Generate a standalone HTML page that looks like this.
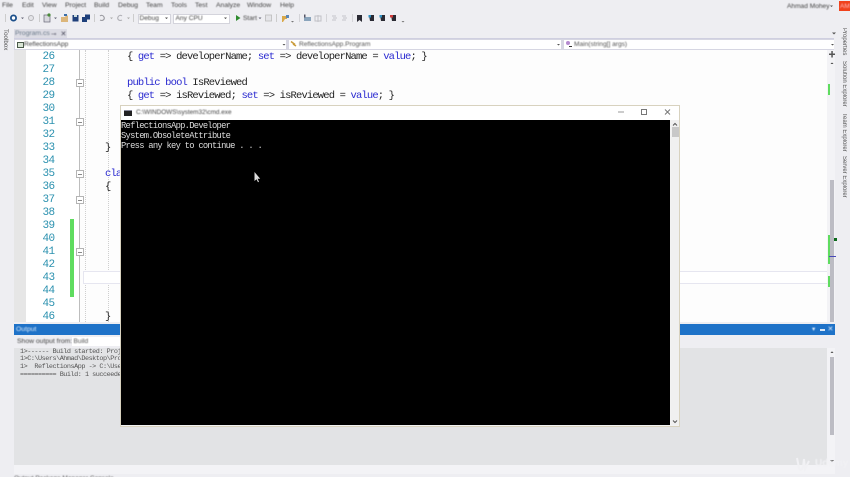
<!DOCTYPE html>
<html style="height:477px;overflow:hidden"><head><meta charset="utf-8">
<style>
html,body{margin:0;padding:0}
body{width:850px;height:477px;overflow:hidden;background:#eeeef2;position:relative;font-family:"Liberation Sans",sans-serif;color:#333}
#r{left:0;top:0;width:850px;height:477px;overflow:hidden}
div,svg{position:absolute}
.t{white-space:nowrap;filter:blur(.4px)}
.m{font-size:6.8px;top:2px;color:#444}
.b{left:0;top:0}
.ln{left:26px;width:28.5px;text-align:right;font:11px/13px "Liberation Mono",monospace;letter-spacing:-.6px;color:#2b91af;filter:blur(.35px)}
.c{font:10.5px/13px "Liberation Mono",monospace;letter-spacing:-.85px;color:#222;white-space:pre;filter:blur(.35px)}
.k{color:#2a2ad0}
.box{width:6px;height:6px;left:75.5px;background:#fff;border:1px solid #b4b4b4}
.box:after{content:"";position:absolute;left:1px;right:1px;top:2.5px;height:1px;background:#888}
.cmd{font:8.8px/10.3px "Liberation Mono",monospace;letter-spacing:-.73px;color:#ddd;white-space:pre;filter:blur(.3px)}
.o{font:6.8px/7.7px "Liberation Mono",monospace;letter-spacing:-.47px;color:#555;white-space:pre;filter:blur(.3px)}
.v{writing-mode:vertical-rl;font-size:6px;color:#555;white-space:nowrap;filter:blur(.35px)}
</style></head><body><div id="r">

<!-- menu -->
<div class="t m" style="left:2px">File</div>
<div class="t m" style="left:22px">Edit</div>
<div class="t m" style="left:42px">View</div>
<div class="t m" style="left:65px">Project</div>
<div class="t m" style="left:94px">Build</div>
<div class="t m" style="left:118px">Debug</div>
<div class="t m" style="left:146px">Team</div>
<div class="t m" style="left:171px">Tools</div>
<div class="t m" style="left:195px">Test</div>
<div class="t m" style="left:216px">Analyze</div>
<div class="t m" style="left:247px">Window</div>
<div class="t m" style="left:280px">Help</div>
<div class="t" style="left:787px;top:3px;font-size:6.6px;color:#444">Ahmad Mohey</div>
<div style="left:839px;top:1px;width:11px;height:10px;background:#f0421c"></div>
<div class="t" style="left:840px;top:2.5px;font-size:6.5px;color:#fbb">AM</div>

<!-- toolbar icons -->
<svg class="b" width="850" height="30" viewBox="0 0 850 30">
<rect x="5" y="14" width="1" height="8" fill="#ccc"/>
<circle cx="13.5" cy="18" r="2.6" fill="#fff" stroke="#1c4f8a" stroke-width="1.8"/>
<path d="M21 17.5h3l-1.5 1.6z" fill="#667"/>
<circle cx="31" cy="18" r="2.5" fill="#e4e4e8" stroke="#b4b4b8"/>
<rect x="39" y="14" width="1" height="8" fill="#ccc"/>
<rect x="44" y="15" width="6" height="7" fill="#d8d8de" stroke="#667" stroke-width=".7"/>
<circle cx="49" cy="15" r="1.6" fill="#4a8a3a"/>
<path d="M54 17.5h3l-1.5 1.6z" fill="#667"/>
<path d="M61 17h4l1-1.5h2V22h-7z" fill="#dcb67a"/><rect x="64" y="14" width="3" height="2" fill="#3a6ea8"/>
<rect x="72.5" y="15" width="6" height="6.5" fill="#1e3f7a"/><rect x="74" y="15" width="3" height="2" fill="#cdd"/>
<rect x="82" y="17" width="5" height="5" fill="#1e3f7a"/><rect x="85" y="14.5" width="5" height="5" fill="#1e3f7a"/>
<rect x="94" y="14" width="1" height="8" fill="#ccc"/>
<path d="M100 20c3 1.5 5-1 4-3s-3-2-4-1" fill="none" stroke="#9a9aa0" stroke-width="1.1"/>
<path d="M110 17.5h3l-1.5 1.6z" fill="#aaa"/>
<path d="M122 20c-3 1.5-5-1-4-3s3-2 4-1" fill="none" stroke="#b0b0b6" stroke-width="1.1"/>
<path d="M127 17.5h3l-1.5 1.6z" fill="#aaa"/>
<rect x="133" y="14" width="1" height="8" fill="#ccc"/>
<path d="M236 15v6l4.5-3z" fill="#2e8b2e"/>
<path d="M258.5 17.5h3l-1.5 1.6z" fill="#667"/>
<rect x="265.5" y="15" width="6" height="6" fill="#e4e4e8" stroke="#bbb" stroke-width=".8"/>
<rect x="276" y="14" width="1" height="8" fill="#ccc"/>
<path d="M282 16h5v3h-2l-2 3h-1z" fill="#d9a94a"/><path d="M286 15h3v3h-3z" fill="#5a86b8"/>
<path d="M291 21h3l-1.5 1.5z" fill="#777"/>
<rect x="299" y="14" width="1" height="8" fill="#d4d4d8"/>
<rect x="304" y="17" width="7" height="4" fill="#8aa4bc"/><rect x="304" y="14.5" width="1.5" height="3" fill="#556"/>
<path d="M315 16h6v5h-6zM318 15v7" fill="none" stroke="#c0c0c6"/>
<rect x="326" y="14" width="1" height="8" fill="#d4d4d8"/>
<path d="M332 16h4M333 18h4M332 20h4" stroke="#c4c4ca" stroke-width=".9"/>
<path d="M342 16h4M343 18h4M342 20h4" stroke="#c4c4ca" stroke-width=".9"/>
<rect x="352" y="14" width="1" height="8" fill="#d4d4d8"/>
<path d="M357 15h5v7l-2.5-2-2.5 2z" fill="#2a2a33"/>
<path d="M369 15h5v6h-4z" fill="#2a2a33"/><rect x="368.5" y="15" width="2.500" height="2.5" fill="#2f8fc0"/>
<path d="M380 15h5v6h-4z" fill="#2a2a33"/><rect x="379.5" y="15" width="2.500" height="2.5" fill="#2f8fc0"/>
<path d="M391 15h5v6h-4z" fill="#2a2a33"/><rect x="390" y="15" width="3" height="2.5" fill="#d03a3a"/>
<path d="M401.5 21h3l-1.5 1.5z" fill="#777"/>
</svg>

<!-- combos -->
<div style="left:138px;top:14px;width:31px;height:8px;background:#fff;border:1px solid #d4d4dc"></div>
<div class="t" style="left:139.5px;top:14.5px;font-size:6.6px;color:#444">Debug</div>
<div style="left:173px;top:14px;width:55px;height:8px;background:#fff;border:1px solid #d4d4dc"></div>
<div class="t" style="left:175.5px;top:14.5px;font-size:6.6px;color:#444">Any CPU</div>
<svg class="b" width="850" height="40"><path d="M165 17.5h3l-1.5 1.6zM224 17.5h3l-1.5 1.6z" fill="#555"/><path d="M832 32.5h4l-2 2zM830 5.5h3l-1.5 1.5z" fill="#555"/></svg>
<div class="t" style="left:243px;top:14.5px;font-size:6.6px;color:#444">Start</div>

<!-- left gutter strip -->
<div class="v" style="left:2px;top:29px;font-size:6.2px">Toolbox</div>

<!-- tab -->
<div style="left:14px;top:29px;width:53px;height:9px;background:#dcdce4"></div>
<div class="t" style="left:15px;top:29.5px;font-size:6.8px;color:#6a7a8a">Program.cs</div>
<div class="t" style="left:51px;top:29.5px;font-size:6.5px;color:#556">⊸</div>
<div class="t" style="left:60.5px;top:29.5px;font-size:7px;color:#445">✕</div>
<div style="left:14px;top:38px;width:820px;height:1px;background:#cfcfe0"></div>

<!-- nav bar -->
<div style="left:14px;top:39px;width:820px;height:11px;background:#d6d6e2"></div>
<div style="left:15px;top:40px;width:271px;height:9px;background:#fff"></div>
<div style="left:289px;top:40px;width:272px;height:9px;background:#fff"></div>
<div style="left:564px;top:40px;width:270px;height:9px;background:#fff"></div>
<div style="left:16.5px;top:41.5px;width:5px;height:4px;background:#d8e4d4;border:1px solid #4a5a4a"></div>
<div class="t" style="left:24px;top:41px;font-size:6.6px;color:#444">ReflectionsApp</div>
<svg class="b" width="850" height="50">
<path d="M291 41.5l4 3M293 44l3 2" stroke="#c99b3a" stroke-width="1.5"/>
<circle cx="568" cy="43" r="2" fill="#b58ad0"/><rect x="569" y="46" width="3" height="1" fill="#333"/>
<path d="M282.5 44h3l-1.5 1.5zM557 44h3l-1.5 1.5zM831 44h3l-1.5 1.5z" fill="#555"/>
</svg>
<div class="t" style="left:299px;top:41px;font-size:6.6px;color:#555">ReflectionsApp.Program</div>
<div class="t" style="left:574px;top:41px;font-size:6.6px;color:#555">Main(string[] args)</div>

<!-- editor -->
<div style="left:14px;top:50px;width:820px;height:272px;background:#fdfdfd"></div>
<div style="left:14px;top:50px;width:12px;height:272px;background:#e6e6e6"></div>
<div style="left:26px;top:50px;width:53px;height:272px;background:#fff"></div>
<div style="left:78.5px;top:50px;width:1px;height:272px;background:#bdbdbd"></div>
<div style="left:85px;top:50px;width:0;height:272px;border-left:1px dotted #cfcfcf"></div>
<div style="left:108px;top:50px;width:0;height:272px;border-left:1px dotted #cfcfcf"></div>
<div style="left:70px;top:219px;width:4px;height:78px;background:#5fdc5f"></div>
<div style="left:83px;top:271px;width:744px;height:11px;background:#fff;border:1px solid #e6e6f0"></div>

<div class="ln" style="top:50.5px">26</div>
<div class="ln" style="top:63.5px">27</div>
<div class="ln" style="top:76.5px">28</div>
<div class="ln" style="top:89.5px">29</div>
<div class="ln" style="top:102.5px">30</div>
<div class="ln" style="top:115.5px">31</div>
<div class="ln" style="top:128.5px">32</div>
<div class="ln" style="top:141.5px">33</div>
<div class="ln" style="top:154.5px">34</div>
<div class="ln" style="top:167.5px">35</div>
<div class="ln" style="top:180.5px">36</div>
<div class="ln" style="top:193.5px">37</div>
<div class="ln" style="top:206.5px">38</div>
<div class="ln" style="top:219.5px">39</div>
<div class="ln" style="top:232.5px">40</div>
<div class="ln" style="top:245.5px">41</div>
<div class="ln" style="top:258.5px">42</div>
<div class="ln" style="top:271.5px">43</div>
<div class="ln" style="top:284.5px">44</div>
<div class="ln" style="top:297.5px">45</div>
<div class="ln" style="top:310.5px">46</div>

<div class="box" style="top:79px"></div>
<div class="box" style="top:118px"></div>
<div class="box" style="top:170px"></div>
<div class="box" style="top:196px"></div>
<div class="box" style="top:248px"></div>

<div class="c" style="left:127px;top:50.5px">{ <span class="k">get</span> =&gt; developerName; <span class="k">set</span> =&gt; developerName = <span class="k">value</span>; }</div>
<div class="c" style="left:127px;top:76.5px"><span class="k">public</span> <span class="k">bool</span> IsReviewed</div>
<div class="c" style="left:127px;top:89.5px">{ <span class="k">get</span> =&gt; isReviewed; <span class="k">set</span> =&gt; isReviewed = <span class="k">value</span>; }</div>
<div class="c" style="left:105px;top:141.5px">}</div>
<div class="c" style="left:105px;top:167.5px"><span class="k">cla</span></div>
<div class="c" style="left:105px;top:180.5px">{</div>
<div class="c" style="left:105px;top:310.5px">}</div>

<!-- editor scrollbar -->
<div style="left:827px;top:50px;width:8px;height:272px;background:#f3f3f6"></div>
<div style="left:830px;top:180px;width:4px;height:142px;background:#bcbcc4"></div>
<svg class="b" width="850" height="70"><path d="M829 53.5h6v1.5h-6zM831.3 51h1.5v6.5h-1.5z" fill="#555"/><path d="M830.5 64h3l-1.5-1.5z" fill="#444"/></svg>
<div style="left:828px;top:84px;width:2px;height:11px;background:#5fdc5f"></div>
<div style="left:828px;top:235px;width:2px;height:29px;background:#5fdc5f"></div>
<div style="left:828px;top:276px;width:2px;height:11px;background:#5fdc5f"></div>
<div style="left:833.5px;top:237.5px;width:3px;height:3px;background:#0a6a1a"></div>
<div style="left:829px;top:256px;width:7px;height:1px;background:#4848b8"></div>

<!-- right side tabs -->
<div class="v" style="left:841px;top:28px">Properties</div>
<div class="v" style="left:841px;top:61px">Solution Explorer</div>
<div class="v" style="left:841px;top:113px">Team Explorer</div>
<div class="v" style="left:841px;top:156px">Server Explorer</div>

<!-- output panel -->
<div style="left:14px;top:324px;width:821px;height:11px;background:#1e72c8"></div>
<div class="t" style="left:16px;top:325.5px;font-size:6.8px;color:#dbe9f7">Output</div>
<div class="t" style="left:812px;top:325px;font-size:6.5px;color:#e8f0fa;letter-spacing:1px">▾</div>
<div style="left:820px;top:329px;width:5px;height:2px;background:#d8e6f6"></div>
<div class="t" style="left:827.5px;top:325px;font-size:7px;color:#e8f0fa">✕</div>
<div style="left:14px;top:335px;width:821px;height:13px;background:#eeeef2"></div>
<div class="t" style="left:17px;top:338px;font-size:6.8px;color:#444">Show output from:</div>
<div style="left:72px;top:337px;width:60px;height:9px;background:#fff"></div>
<div class="t" style="left:73.5px;top:338px;font-size:6.6px;color:#555">Build</div>
<div style="left:14px;top:348px;width:813px;height:117px;background:#e2e3e5"></div>
<div style="left:827px;top:348px;width:8px;height:117px;background:#f3f3f6"></div>
<div style="left:830px;top:356.5px;width:4px;height:78px;background:#bcbcc4"></div>
<svg class="b" style="top:340px" width="850" height="130"><path d="M830.5 13h3l-1.5-1.8zM830 120h4l-2 2.2z" fill="#555"/></svg>
<div class="o" style="left:20px;top:348.5px">1&gt;------ Build started: Proj
1&gt;C:\Users\Ahmad\Desktop\Pro
1&gt;  ReflectionsApp -&gt; C:\Use
========== Build: 1 succeede</div>
<div style="left:14px;top:465px;width:821px;height:9px;background:#f3f3f6"></div>
<div class="t" style="left:14px;top:475px;font-size:6.5px;color:#666">Output   Package   Manager   Console</div>

<!-- cmd window -->
<div style="left:120px;top:105px;width:558px;height:320px;background:#f2f2f2;border:1px solid #d8d2bf"></div>
<div style="left:121px;top:106px;width:558px;height:14px;background:#fff"></div>
<div style="left:124px;top:110px;width:8px;height:5px;background:#222;border-top:1px solid #889"></div>
<div class="t" style="left:136px;top:109px;font-size:6.4px;color:#444">C:\WINDOWS\system32\cmd.exe</div>
<svg class="b" width="850" height="125">
<path d="M618 112h6" stroke="#999" stroke-width="1"/>
<rect x="641.5" y="109.5" width="5" height="5" fill="none" stroke="#777"/>
<path d="M665 109.5l5 5M670 109.5l-5 5" stroke="#777"/>
</svg>
<div style="left:121px;top:120px;width:549px;height:305px;background:#000"></div>
<div style="left:671px;top:120px;width:8px;height:305px;background:#f0f0f0"></div>
<div style="left:671.5px;top:127px;width:7px;height:10px;background:#c8c8c8"></div>
<svg class="b" width="850" height="430"><path d="M673 125.5l2-2 2 2M673 420.5l2 2 2-2" fill="none" stroke="#555"/></svg>
<div class="cmd" style="left:121px;top:120.5px">ReflectionsApp.Developer
System.ObsoleteAttribute
Press any key to continue . . .</div>
<svg class="b" width="850" height="190"><path d="M254.5 172v9l2-1.800 1.500 3 1-.5-1.400-3h2.600z" fill="#ddd"/></svg>

<!-- watermark -->
<div class="t" style="left:815px;top:458px;font-size:10px;font-weight:bold;color:#f1f1f4">Udemy</div>
<svg class="b" style="left:795px;top:455px" width="20" height="20"><path d="M2 3l2 10c1 3 3 2 4-1l1-8M9 4l1 10 4-8" fill="none" stroke="#f1f1f4" stroke-width="2"/></svg>

</div></body></html>
